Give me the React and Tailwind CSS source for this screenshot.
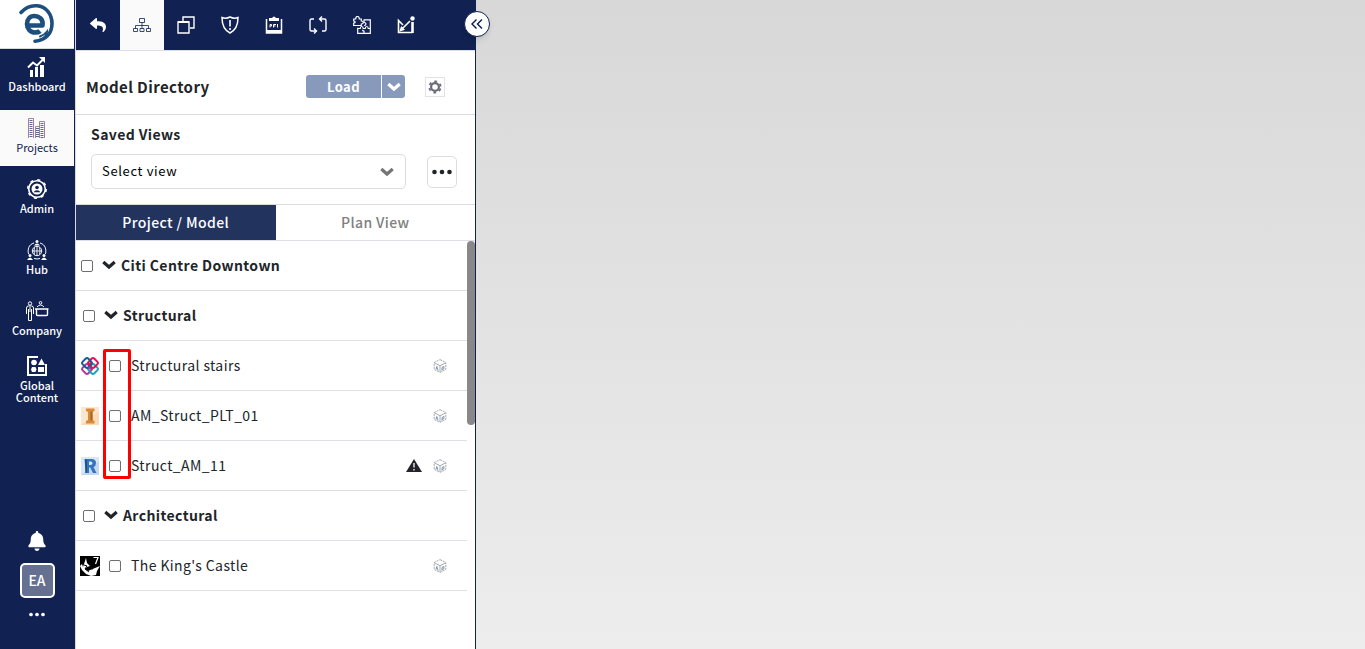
import React from 'react'
import { FaBell, FaReply } from 'react-icons/fa'

// --- Sidebar icons ---

const IconLogo = () => (
  <svg className="h-11 w-11" viewBox="0 0 44 44" fill="none" stroke="#1d4e80" strokeLinecap="round">
    <path d="M6 10.500C12 4 19 3.500 22 3.800 31 4.500 37 12 37 21.500 37 31 31 38.500 20 39.200" strokeWidth="3.600" />
    <path d="M12 23.500h15.500c1-7-4-9.500-8-9.500-5 0-7.500 4-7.500 8 0 5 3.500 8.500 8 8.500 2.500 0 4-.5 5-1.500" strokeWidth="4.600" strokeLinecap="butt" strokeLinejoin="round" />
    <path d="M24 38c5-1.500 8-4.500 8-8.500-2 2.500-4 4-7 5" strokeWidth="2" />
  </svg>
)

const IconDashboard = () => (
  <svg className="h-5 w-5" viewBox="0 0 20 20" fill="currentColor">
    <path d="M3 13h3v7H3zM8 10h3v10H8zM13 8h4v12h-4z" />
    <path d="M1 10.500 6 5.500l4 3L16 2.500" fill="none" stroke="currentColor" strokeWidth="2" />
    <path d="M12 0h6v6z" />
  </svg>
)

const IconProjects = () => (
  <svg className="h-5 w-5" viewBox="0 0 20 20" fill="none" stroke="currentColor">
    <path d="M1.500 20V.5h5V20M8.500 20V8.500h4V20M12.500 20V3.500h5V20" stroke="#a87f9c" />
    <path d="M4 2v18M10.500 10v10M15 5v15" strokeWidth="3" strokeDasharray="1 1" stroke="#566b93" />
  </svg>
)

const IconAdmin = () => (
  <svg className="h-5 w-5" viewBox="0 0 20 20" fill="none" stroke="currentColor">
    <circle cx="10" cy="10" r="8.300" strokeWidth="1.600" />
    <circle cx="10" cy="10" r="9.200" strokeWidth="1.600" strokeDasharray="3 4.220" />
    <circle cx="10" cy="10" r="5.500" fill="currentColor" stroke="none" />
    <circle cx="10" cy="8.500" r="1.800" fill="#102152" stroke="none" />
    <path d="M6.800 13.200c.8-2.700 5.600-2.700 6.400 0z" fill="#102152" stroke="none" />
  </svg>
)

const IconHub = () => (
  <svg className="h-5 w-5" viewBox="0 0 20 20" fill="none" stroke="currentColor">
    <path d="M7 3C1.500 4.500.5 9.500 1.500 14M13 3c5.500 1.500 6.500 6.500 5.500 11M7 18.500q3 1 6 0" />
    <circle cx="10" cy="11" r="4.700" />
    <path d="M5.500 11h9M10 6.500v9M7.500 7.500q-1 3.500 0 7M12.500 7.500q1 3.500 0 7" strokeWidth=".9" />
    <g fill="currentColor" stroke="none">
      <circle cx="10" cy="1.500" r="1.500" />
      <path d="M7 5.500q3-4 6 0z" />
      <circle cx="3" cy="15.500" r="1.500" />
      <path d="M0 20q3-5 6 0z" />
      <circle cx="17" cy="15.500" r="1.500" />
      <path d="M14 20q3-5 6 0z" />
    </g>
  </svg>
)

const IconCompany = () => (
  <svg className="h-5 w-6" viewBox="0 0 24 20" fill="none" stroke="currentColor">
    <circle cx="5" cy="2.500" r="1.700" />
    <path d="M1.500 13V7q0-2 2-2h3q2 0 2 2v6M3.500 8v11.500h3V8M5 6v5" />
    <circle cx="15.500" cy="1.800" r="1.300" />
    <path d="M12 6q3.500-4 7 0" />
    <path d="M10 8h13.500M11.500 8v5.500q0 1 1 1h9q1 0 1-1V8" strokeWidth="1.400" />
  </svg>
)

const IconGlobal = () => (
  <svg className="h-5 w-5" viewBox="0 0 20 20" fill="currentColor">
    <path d="M1 1h10M1 0v19h18V8M0 1h2" fill="none" stroke="currentColor" strokeWidth="2" />
    <circle cx="7" cy="6.500" r="2.800" />
    <path d="M14.500 2.500 18 9h-7zM11 11h6v5h-6z" />
    <path d="M5 11h3.500l1 2.500-1 2.500H5l-1-2.500z" />
  </svg>
)

const IconDots = ({ className }) => (
  <svg className={className} viewBox="0 0 20 6" fill="currentColor">
    <circle cx="2.500" cy="3" r="2.300" />
    <circle cx="10" cy="3" r="2.300" />
    <circle cx="17.500" cy="3" r="2.300" />
  </svg>
)

const IconChevron = ({ className }) => (
  <svg className={className} viewBox="0 0 14 10" fill="none" stroke="currentColor" strokeWidth="3.200">
    <path d="m1.300 2 5.700 5 5.700-5" />
  </svg>
)

// --- Toolbar icons ---

const IconTree = () => (
  <svg className="h-[18px] w-[18px]" viewBox="0 0 18 18" fill="none" stroke="currentColor" strokeWidth=".8">
    <path d="M6.500 2.500h5v4h-5zM.5 12.500h4v3h-4zM7 12.500h4v3H7zM13.500 12.500h4v3h-4zM9 6.500v6M2.500 12.500v-3h13v3" />
  </svg>
)

const IconWindows = () => (
  <svg className="h-[18px] w-[18px]" viewBox="0 0 18 18" fill="none" stroke="currentColor" strokeWidth="1.400">
    <path d="M6 5V1h11v11h-4" />
    <path d="M1 6h11v11H1z" />
    <path d="M1 6h11" strokeWidth="2" />
  </svg>
)

const IconShield = () => (
  <svg className="h-[18px] w-[18px]" viewBox="0 0 18 18" fill="none" stroke="currentColor" strokeWidth="1.500">
    <path d="M9 1Q5 3 1 1.500C1 9 3 14 9 17c6-3 8-8 8-15.500Q13 3 9 1z" />
    <path d="M9 4v6.500M9 12v2" strokeWidth="1.600" />
  </svg>
)

const IconRfi = () => (
  <svg className="h-[18px] w-[18px]" viewBox="0 0 18 18">
    <path d="M1.500 3v14h15V3" fill="none" stroke="currentColor" strokeWidth="1.500" />
    <path d="M2 14h14v3H2zM4 5V2h3q2-3 4 0h3v3z" fill="currentColor" />
    <path d="M5 11.500v-3h1.500V10H5M8.500 11.500v-3H11M8.500 10h2M12.500 8v3.500" fill="none" stroke="currentColor" />
  </svg>
)

const IconLoop = () => (
  <svg className="h-[18px] w-[18px]" viewBox="0 0 18 18" fill="none" stroke="currentColor" strokeWidth="1.400">
    <path d="M5 3H2.500Q1 3 1 4.500v9Q1 15 2.500 15H7M5 12.500 7.500 15 5 17.500M13 15h2.500q1.500 0 1.500-1.500v-9Q17 3 15.500 3H11M13 .5 10.500 3 13 5.500" />
  </svg>
)

const IconPuzzle = () => (
  <svg className="h-[18px] w-[18px]" viewBox="0 0 18 18" fill="none" stroke="currentColor" strokeWidth="1.200">
    <path d="M.7 3h2q0-2.500 1.800-2.500T6.300 3h2v2q2 0 2 1.500T8.300 8v1.500H.7V7q1.500 0 1.500-1T.7 5z" />
    <path d="M10.500 3.800h6.800v13.500H4.700v-5.500M4.700 12.500h2.500q0-2 1.500-2t1.500 2h2q0-2 1.500-2t1.500 2h2M11 17.500v-2.300q-1.500 0-1.500-1.400M11 4v2.500q2 0 2 1.500t-2 1.500" />
  </svg>
)

const IconMarkup = () => (
  <svg className="h-[18px] w-[18px]" viewBox="0 0 18 18" fill="none" stroke="currentColor" strokeWidth="1.600">
    <path d="M6 9 1.500 4.500v12h14" />
    <path d="M5.500 12.500 13 5M3.500 14.500l1-3 2 2z" />
    <circle cx="15.500" cy="2.500" r="2.200" fill="currentColor" stroke="none" />
    <path d="M15.500 6v11" strokeWidth="2.600" />
  </svg>
)

const IconGear = () => (
  <svg className="h-[14px] w-[14px]" viewBox="0 0 14 14" fill="none" stroke="currentColor">
    <circle cx="7" cy="7" r="3.900" strokeWidth="2.200" />
    <circle cx="7" cy="7" r="5.700" strokeWidth="1.800" strokeDasharray="2.800 3.169" strokeDashoffset="4.384" />
  </svg>
)

const IconWarning = () => (
  <svg className="h-[13px] w-4" viewBox="0 0 16 13">
    <path d="M8 0l8 13H0z" fill="currentColor" />
    <path d="M8 4v4.500M8 10v1.500" stroke="#fff" strokeWidth="1.300" />
  </svg>
)

const IconCube = () => (
  <svg className="h-[14px] w-[14px] text-[#92949c]" viewBox="0 0 14 14" fill="none" stroke="currentColor" strokeWidth=".8">
    <path d="M7 .6 12.800 3.500v7L7 13.400 1.200 10.500v-7z" strokeDasharray="2.200 .8" />
    <path d="m1.500 4 5.500 2.700L12.500 4M7 7v6" />
    <path d="m3 10.500.8-3 1.200 4M9 11.500v-3l2-1v2L9 10.500" stroke="#5d7f9e" />
  </svg>
)

// --- Model file type icons ---

const IconIfc = () => (
  <svg className="h-5 w-5" viewBox="0 0 20 20" fill="none" strokeWidth="2">
    <rect x="3" y="9" width="8" height="8" rx="2" transform="rotate(45 7 13)" stroke="#b0399b" />
    <rect x="9" y="9" width="8" height="8" rx="2" transform="rotate(45 13 13)" stroke="#16a6b6" />
    <rect x="9" y="3" width="8" height="8" rx="2" transform="rotate(45 13 7)" stroke="#e4105a" />
    <rect x="3" y="3" width="8" height="8" rx="2" transform="rotate(45 7 7)" stroke="#155a9c" />
    <path d="M8.500 9 11 6.500" stroke="#e4105a" />
    <path d="m8.500 11 2.500 2.500" stroke="#b0399b" />
  </svg>
)

const IconInventor = () => (
  <svg className="h-5 w-5" viewBox="0 0 20 20">
    <path d="M1 1h18v18H1z" fill="#fde6d0" />
    <path d="M1 19 19 5v14z" fill="#fbd9b9" />
    <path d="M6 2.500h8.500V5l-2 1v8l2 1v2.500H6V15l2-1V6L6 5z" fill="#d98a36" />
    <path d="M10.500 5.500h2V14l-2 1z" fill="#a3651f" />
  </svg>
)

const IconRevit = () => (
  <svg className="h-5 w-5" viewBox="0 0 20 20">
    <path d="M1 1h18v18H1z" fill="#dbe7f5" />
    <path d="M1 19 19 5v14z" fill="#c3d7ee" />
    <path d="M4.500 3h7q4.500 0 4.500 4 0 3-2.500 4l3 6H13l-2.800-5.500H9V17H5.500zM9 5.500v3.500h1.500q2 0 2-1.800t-2-1.700z" fill="#3474b8" fillRule="evenodd" />
    <path d="M5 3.500h2V17H5.500z" fill="#1f5191" />
  </svg>
)

const IconRhino = () => (
  <svg className="h-5 w-5" viewBox="0 0 20 20">
    <path d="M0 0h20v20H0z" fill="#000" />
    <path d="m0 10 2-2 1 3 3-9 1 5 3 3-3 1-2 2 3 2 7-3 5-2-3 5-1 4-5 1-5-2-4-4z" fill="#fff" />
    <path d="m4 9 3 1-2 3 4 3M10 12l3 1" fill="none" stroke="#000" />
    <path d="M13.500 1.500H18L15.500 8" fill="none" stroke="#fff" strokeWidth="1.200" />
  </svg>
)

const navItems = [
  { label: 'Dashboard', icon: IconDashboard },
  { label: 'Projects', icon: IconProjects, active: true },
  { label: 'Admin', icon: IconAdmin },
  { label: 'Hub', icon: IconHub },
  { label: 'Company', icon: IconCompany },
  { label: 'Global Content', icon: IconGlobal },
]

const tools = [
  { label: 'Back', icon: () => <FaReply className="h-4 w-4" /> },
  { label: 'Model directory', icon: IconTree, active: true },
  { label: 'Windows', icon: IconWindows },
  { label: 'Issues', icon: IconShield },
  { label: 'RFI', icon: IconRfi },
  { label: 'Workflow', icon: IconLoop },
  { label: 'Plugins', icon: IconPuzzle },
  { label: 'Markup', icon: IconMarkup },
]

const rows = [
  { id: 'citi', label: 'Citi Centre Downtown', group: true, root: true },
  { id: 'structural', label: 'Structural', group: true },
  { id: 'stairs', label: 'Structural stairs', icon: IconIfc },
  { id: 'plt', label: 'AM_Struct_PLT_01', icon: IconInventor },
  { id: 'am11', label: 'Struct_AM_11', icon: IconRevit, warning: true },
  { id: 'arch', label: 'Architectural', group: true },
  { id: 'castle', label: "The King's Castle", icon: IconRhino },
]

const checkbox = 'h-3 w-3 shrink-0 appearance-none rounded-[2px] border border-[#6f6f6f] bg-white checked:bg-[#102152]'

const Sidebar = () => (
  <aside className="flex w-19 shrink-0 flex-col border-r border-[#d9dbe3] bg-[#102152] text-white">
    <a href="#home" aria-label="Home" className="mr-px flex h-[49px] shrink-0 items-center justify-center border-b border-[#d9d9d9] bg-white">
      <IconLogo />
    </a>
    <nav className="flex flex-col gap-[5px]">
      {navItems.map(({ label, icon: Icon, active }) => (
        <a
          key={label}
          href={`#${label}`}
          className={`mr-px flex h-14 flex-col items-center justify-center gap-[3px] pb-[5px] text-center text-[11px] leading-3 ${
            active ? 'bg-[#fafafa] text-[#102152]' : 'font-medium'
          }`}
        >
          <Icon />
          <span className="max-w-15">{label}</span>
        </a>
      ))}
    </nav>
    <div className="mt-auto mr-px flex flex-col items-center pb-[30px]">
      <button aria-label="Notifications" className="mb-3">
        <FaBell className="h-5 w-5" />
      </button>
      <button className="mb-3 h-[35px] w-[35px] rounded-[5px] border-2 border-white bg-[#667090] pb-0.5 text-sm font-medium">EA</button>
      <button aria-label="More">
        <IconDots className="h-[9px] w-4" />
      </button>
    </div>
  </aside>
)

const Toolbar = () => (
  <div className="flex h-[51px] shrink-0 border-b border-[#dcdfe6] bg-[#102152] text-white">
    {tools.map(({ label, icon: Icon, active }) => (
      <button
        key={label}
        aria-label={label}
        className={`flex w-11 items-center justify-center ${active ? 'bg-[#fafafa] text-[#102152]' : ''}`}
      >
        <Icon />
      </button>
    ))}
  </div>
)

const ModelRow = ({ row }) => {
  const Icon = row.icon
  return (
    <li className="flex h-[50px] items-center border-b border-[#dcdfe6] pr-5 text-sm">
      {row.group ? (
        <>
          <input id={row.id} type="checkbox" className={`${checkbox} ${row.root ? 'ml-[5px]' : 'ml-[7px]'}`} />
          <button aria-label={`Collapse ${row.label}`} className="ml-[9px] pb-0.5">
            <IconChevron className="h-[10px] w-[14px]" />
          </button>
          <label htmlFor={row.id} className="ml-[5px] pb-0.5 font-bold">{row.label}</label>
        </>
      ) : (
        <>
          <span className="ml-1">
            <Icon />
          </span>
          <input id={row.id} type="checkbox" className={`${checkbox} ml-[9px]`} />
          <label htmlFor={row.id} className="ml-2.5 pb-0.5">{row.label}</label>
          <span className="ml-auto flex items-center gap-[11px]">
            {row.warning && <IconWarning />}
            <IconCube />
          </span>
        </>
      )}
    </li>
  )
}

const DirectoryPanel = () => (
  <section className="relative flex w-100 shrink-0 flex-col border-r border-[#102152] bg-white tracking-wide text-[#212529]">
    <Toolbar />

    <div className="flex h-16 shrink-0 items-center border-b border-[#dcdcdc] px-2.5 pt-2">
      <h1 className="flex-1 pt-0.5 text-[15px] font-bold">Model Directory</h1>
      <div className="flex h-[23px] overflow-hidden rounded-[3px] bg-[#879abc] text-white">
        <button className="w-[75px] text-[13px] leading-5 font-bold">Load</button>
        <button aria-label="Load options" className="flex w-6 items-center justify-center border-l border-white">
          <IconChevron className="h-[10px] w-[14px]" />
        </button>
      </div>
      <button aria-label="Settings" className="mr-5 ml-5 flex h-5 w-5 items-center justify-center border border-[#e3e3e3] text-[#696b7a]">
        <IconGear />
      </button>
    </div>

    <div className="shrink-0 border-b border-[#dcdcdc] px-[15px] pt-[9px] pb-[15px]">
      <label htmlFor="saved-view" className="block text-sm leading-5 font-bold">Saved Views</label>
      <div className="mt-2.5 flex items-center">
        <div className="relative w-[315px]">
          <select id="saved-view" className="h-[35px] w-full appearance-none rounded-[5px] border border-[#dcdcdc] bg-white px-2.5 pb-0.5 text-[13px] tracking-wider text-black">
            <option>Select view</option>
          </select>
          <IconChevron className="pointer-events-none absolute top-[13px] right-3 h-[10px] w-[14px] text-[#757575]" />
        </div>
        <button aria-label="View options" className="ml-[21px] flex h-8 w-[30px] items-center justify-center rounded-[5px] border border-[#dcdcdc]">
          <IconDots className="h-[6px] w-5" />
        </button>
      </div>
    </div>

    <div role="tablist" className="flex h-9 shrink-0 border-b border-[#dcdfe6] text-sm font-medium">
      <button role="tab" aria-selected="true" className="w-1/2 bg-[#22335e] pb-0.5 text-white">Project / Model</button>
      <button role="tab" aria-selected="false" className="w-1/2 pb-0.5 text-[#808080]">Plan View</button>
    </div>

    <div className="relative flex min-h-0 flex-1">
      <ul className="flex-1">
        {rows.map((row) => (
          <ModelRow key={row.id} row={row} />
        ))}
      </ul>
      <div className="h-[45%] w-2 rounded-full bg-[#888]" />
      {/* Highlight around the model checkboxes */}
      <div className="pointer-events-none absolute top-[108px] left-[27px] h-[130px] w-7 rounded-[2px] border-3 border-[#f00]" />
    </div>

    <button
      aria-label="Collapse panel"
      className="absolute top-[11px] -right-[15px] flex h-[26px] w-[26px] items-center justify-center rounded-full border border-[#102152] bg-white text-[#102152] shadow-md"
    >
      <svg className="h-3 w-3" viewBox="0 0 12 12" fill="none" stroke="currentColor" strokeWidth="1.500">
        <path d="M5.500 1.500 1 6l4.500 4.500M11 1.500 6.500 6l4.500 4.500" />
      </svg>
    </button>
  </section>
)

export default function App() {
  return (
    <div className="flex h-screen overflow-hidden font-['Noto_Sans_CJK_SC','Noto_Sans',sans-serif]">
      <Sidebar />
      <DirectoryPanel />
      <main className="flex-1 bg-linear-to-b from-[#d8d8d8] to-[#ededed]" />
    </div>
  )
}
